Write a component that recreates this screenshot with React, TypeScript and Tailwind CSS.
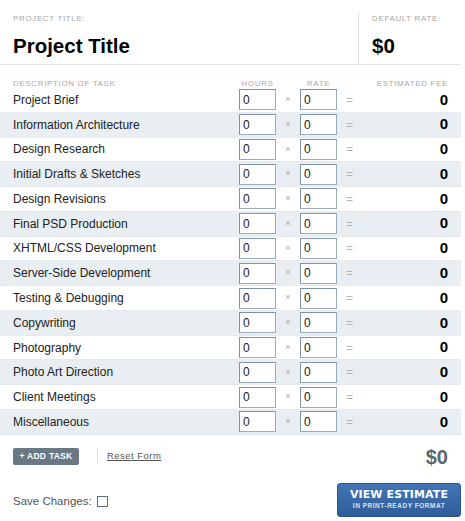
import React from "react";

const tasks = [
  "Project Brief",
  "Information Architecture",
  "Design Research",
  "Initial Drafts & Sketches",
  "Design Revisions",
  "Final PSD Production",
  "XHTML/CSS Development",
  "Server-Side Development",
  "Testing & Debugging",
  "Copywriting",
  "Photography",
  "Photo Art Direction",
  "Client Meetings",
  "Miscellaneous",
];

const label = "text-[8px] tracking-[0.08em] uppercase text-[#a9a9a9]";

const NumBox: React.FC = () => (
  <div className="w-[37px] h-[21px] bg-white border border-[#9aabbb] border-t-[#7f93a6] border-l-[#7f93a6] flex items-center pl-[3px] text-[12px] text-[#222]">
    0
  </div>
);

const App: React.FC = () => {
  return (
    <div
      className="w-[465px] h-[521px] bg-white overflow-hidden"
      style={{ fontFamily: '"Liberation Sans", Arial, sans-serif' }}
    >
      <div className="w-[461px]">
        {/* header */}
        <div className="flex h-[65px] border-b border-[#dde3e8]">
          <div className="flex-1 pl-[13px] pt-[13px]">
            <div className={label}>Project Title:</div>
            <div className="text-[20.5px] font-bold text-black mt-[11px] leading-none">
              Project Title
            </div>
          </div>
          <div className="w-[103px] mt-[12px] border-l border-[#e3e3e3] pl-[13px] pt-[1px]">
            <div className={label}>Default Rate:</div>
            <div className="text-[20.5px] font-bold text-black mt-[11px] leading-none">
              $0
            </div>
          </div>
        </div>

        {/* column headings */}
        <div className="flex items-end h-[23px] pl-[13px] leading-[9px]">
          <div className={`w-[226px] ${label}`}>Description of Task</div>
          <div className={`w-[37px] text-center ${label}`}>Hours</div>
          <div className="w-[24px]" />
          <div className={`w-[37px] text-center ${label}`}>Rate</div>
          <div className={`flex-1 text-right pr-[13px] ${label}`}>Estimated Fee</div>
        </div>

        {/* task rows */}
        <div>
          {tasks.map((t, i) => (
            <div
              key={t}
              className={`flex items-center h-[24.77px] pl-[13px] border-b border-[#e4eaee] ${
                i % 2 === 1 ? "bg-[#e8eef2]" : "bg-white"
              }`}
            >
              <div className="w-[226px] text-[12px] text-[#222]">{t}</div>
              <NumBox />
              <div className="w-[24px] text-center text-[9px] text-[#aaa]">×</div>
              <NumBox />
              <div className="w-[24px] pl-[9px] text-[12px] text-[#b5b5b5]">=</div>
              <div className="flex-1 text-right pr-[13px] text-[15px] font-bold text-black">
                0
              </div>
            </div>
          ))}
        </div>

        {/* actions */}
        <div className="flex items-start mt-[13px] pl-[13px]">
          <button className="w-[66px] h-[17px] bg-[#6a7886] rounded-[2px] text-white text-[8.5px] font-bold tracking-[0.03em] flex items-center justify-center">
            + ADD TASK
          </button>
          <div className="w-px h-[15px] bg-[#dddddd] ml-[18px]" />
          <a className="ml-[9px] mt-[1px] text-[9.5px] tracking-[0.05em] text-[#555] underline">
            Reset Form
          </a>
          <div
            className="flex-1 text-right pr-[13px] text-[20px] font-bold text-[#5b6670] leading-none -mt-[1px]"
            style={{ fontFamily: '"Liberation Sans Narrow", "Liberation Sans", Arial, sans-serif' }}
          >
            $0
          </div>
        </div>

        <div className="flex items-center justify-between mt-[16px] pl-[13px]">
          <div className="flex items-center mt-[3px]">
            <span className="text-[11.5px] text-[#555]">Save Changes:</span>
            <span className="ml-[5px] w-[11px] h-[11px] border border-[#56708c] bg-white" />
          </div>
          <button className="w-[124px] h-[34px] rounded-[3px] bg-gradient-to-b from-[#4275b5] to-[#2f5d9a] border border-[#2b558c] flex flex-col items-center justify-center text-white">
            <span
              className="text-[11px] font-bold leading-none tracking-[0.01em]"
              style={{ fontFamily: '"DejaVu Sans", Verdana, sans-serif' }}
            >
              VIEW ESTIMATE
            </span>
            <span className="text-[6.5px] font-bold leading-none mt-[3px] tracking-[0.08em] text-[#d6e2f2]">
              IN PRINT-READY FORMAT
            </span>
          </button>
        </div>
      </div>
    </div>
  );
};

export default App;
